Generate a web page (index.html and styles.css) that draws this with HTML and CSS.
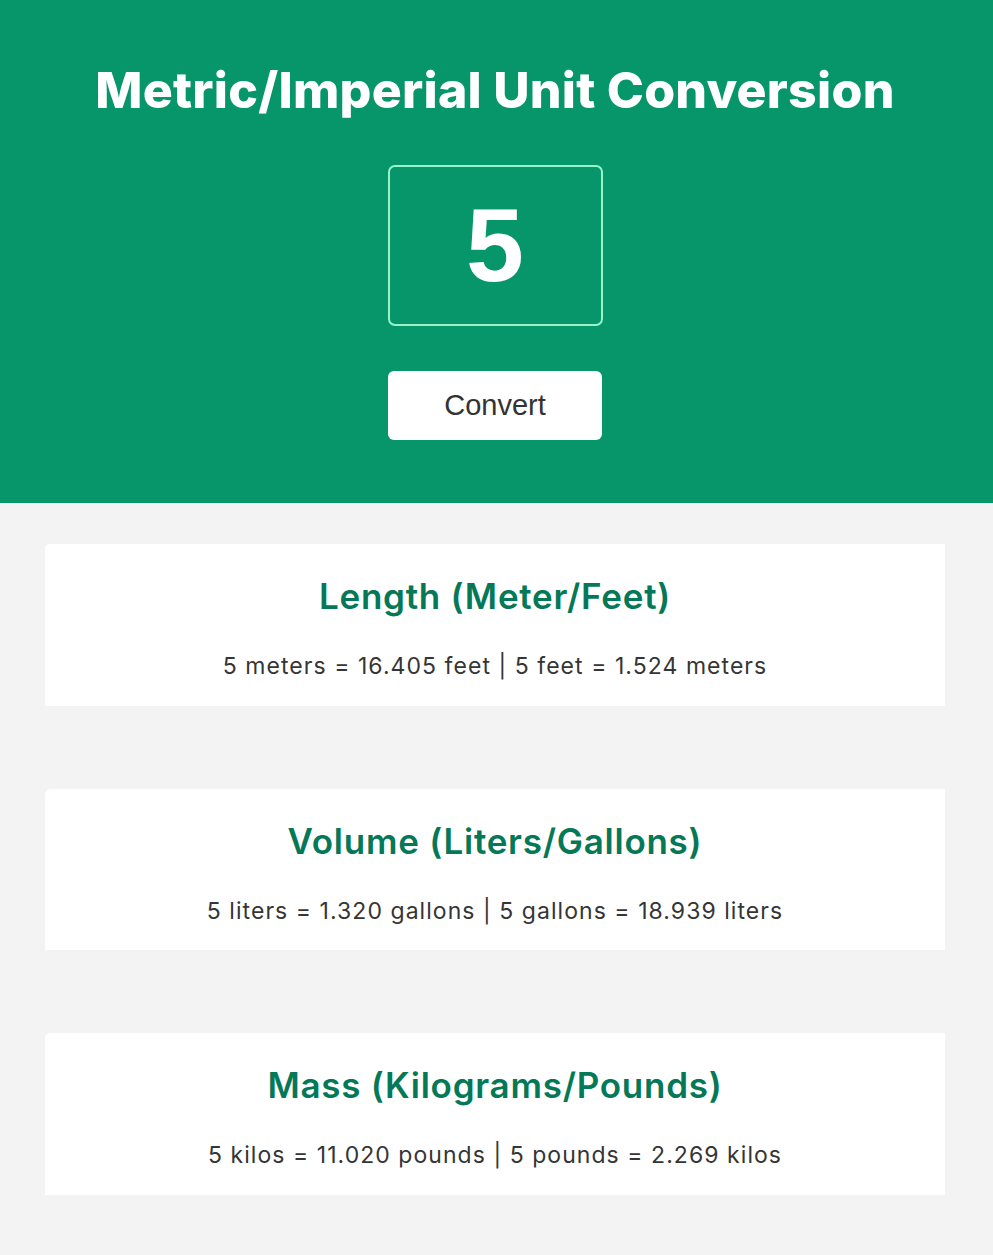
FILE: index.html
```html
<!DOCTYPE html>
<html lang="en">
<head>
<meta charset="utf-8">
<title>Metric/Imperial Unit Conversion</title>
<link rel="stylesheet" href="styles.css">
</head>
<body>
<header class="hero">
  <h1 class="hero-title">Metric/Imperial Unit Conversion</h1>
  <input class="num-input" type="text" value="5">
  <button class="convert-btn" type="button">Convert</button>
</header>
<main class="results">
  <section class="card">
    <h2 class="card-title">Length (Meter/Feet)</h2>
    <p class="card-text">5 meters = 16.405 feet | 5 feet = 1.524 meters</p>
  </section>
  <section class="card">
    <h2 class="card-title">Volume (Liters/Gallons)</h2>
    <p class="card-text">5 liters = 1.320 gallons | 5 gallons = 18.939 liters</p>
  </section>
  <section class="card">
    <h2 class="card-title">Mass (Kilograms/Pounds)</h2>
    <p class="card-text">5 kilos = 11.020 pounds | 5 pounds = 2.269 kilos</p>
  </section>
</main>
</body>
</html>
```
FILE: styles.css
```css
* { box-sizing: border-box; }
html, body { margin: 0; padding: 0; }
body {
  background: #f3f3f3;
  font-family: Inter, "Noto Sans", sans-serif;
  color: #353535;
  min-height: 1255px;
}
.hero {
  background: #069669;
  height: 503px;
  display: flex;
  flex-direction: column;
  align-items: center;
  padding-top: 60px;
  padding-right: 3px;
}
.hero-title {
  margin: 0;
  color: #fff;
  font-family: Inter, sans-serif;
  font-weight: 800;
  font-size: 50px;
  line-height: 60px;
  letter-spacing: 0.25px;
}
.num-input {
  margin-top: 45px;
  width: 215px;
  height: 161px;
  background: transparent;
  border: 2px solid #9af2c9;
  border-radius: 7px;
  color: #fff;
  text-align: center;
  font-family: "Liberation Sans", Arial, sans-serif;
  font-weight: 700;
  font-size: 104px;
  padding: 0;
  outline: none;
}
.convert-btn {
  margin-top: 45px;
  width: 214px;
  height: 69px;
  background: #fff;
  border: none;
  border-radius: 6px;
  color: #333;
  font-family: "Liberation Sans", Arial, sans-serif;
  font-size: 29px;
  padding: 0;
}
.results {
  padding: 41px 48px 40px 45px;
  display: flex;
  flex-direction: column;
  gap: 83px;
}
.card {
  background: #fff;
  border-radius: 5px 0 0 0;
  height: 161.5px;
  text-align: center;
  padding-top: 31px;
}
.card-title {
  margin: 0;
  color: #047857;
  font-weight: 600;
  font-size: 35px;
  line-height: 42px;
  letter-spacing: 0.75px;
}
.card-text {
  margin: 35px 0 0;
  font-size: 23px;
  line-height: 28px;
  letter-spacing: 1.05px;
  color: #353535;
}
```
